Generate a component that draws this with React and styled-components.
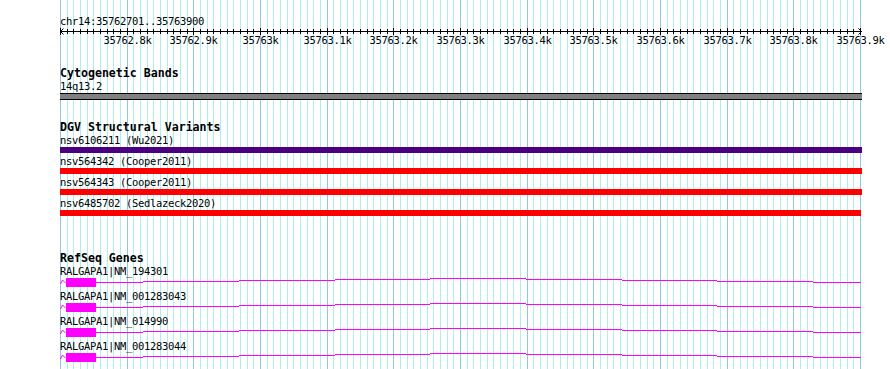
import styled, { createGlobalStyle } from "styled-components";

const GlobalStyle = createGlobalStyle`
  html, body {
    margin: 0;
    padding: 0;
    background: #ffffff;
  }
`;

const MONO = `"DejaVu Sans Mono", "Liberation Mono", monospace`;
const SPAN = 800; // px covered by 35762701..35763900
const STEPS = 120; // 10bp grid
const xAt = (k) => Math.round((k * SPAN) / STEPS) + 0.5;

const ticks = Array.from({ length: STEPS + 1 }, (_, k) => k);
const rulerLabels = [
  "35762.8k", "35762.9k", "35763k", "35763.1k", "35763.2k", "35763.3k",
  "35763.4k", "35763.5k", "35763.6k", "35763.7k", "35763.8k", "35763.9k",
];

const variants = [
  { name: "nsv6106211 (Wu2021)", color: "#4b0082", width: 802 },
  { name: "nsv564342 (Cooper2011)", color: "#ff0000", width: 802 },
  { name: "nsv564343 (Cooper2011)", color: "#ff0000", width: 802 },
  { name: "nsv6485702 (Sedlazeck2020)", color: "#ff0000", width: 801 },
];

const genes = [
  "RALGAPA1|NM_194301",
  "RALGAPA1|NM_001283043",
  "RALGAPA1|NM_014990",
  "RALGAPA1|NM_001283044",
];

// intron hat, x from..to (relative to track start) and row
const intron = [
  [36, 83, 5], [83, 179, 4], [179, 275, 3], [275, 370, 2], [370, 466, 1],
  [466, 562, 2], [562, 657, 3], [657, 753, 4], [753, 801, 5],
];

export default function App() {
  return (
    <>
      <GlobalStyle />
      <Page>
        <Panel>
          <GridLayer width="802" height="369" shapeRendering="crispEdges">
            {ticks.map((k) => (
              <line
                key={k}
                x1={xAt(k)}
                x2={xAt(k)}
                y1="0"
                y2="369"
                stroke={k % 10 === 0 ? "#8cc6ea" : "#aeeeee"}
                strokeWidth="1"
              />
            ))}
          </GridLayer>
          <Tracks>
            <RulerTrack>
              <FeatureLabel>chr14:35762701..35763900</FeatureLabel>
              <Ruler width="830" height="20">
                <g shapeRendering="crispEdges" stroke="#000">
                  <line x1="0" x2="802" y1="4.5" y2="4.5" />
                  {ticks.map((k) => (
                    <line
                      key={k}
                      x1={xAt(k)}
                      x2={xAt(k)}
                      y1={k % 10 === 0 ? 1 : 2}
                      y2={k % 10 === 0 ? 8 : 7}
                    />
                  ))}
                </g>
                <polyline points="3.5,1.5 0.5,4.5 3.5,7.5" fill="none" stroke="#000" />
                <polyline points="798.5,1.5 801.5,4.5 798.5,7.5" fill="none" stroke="#000" />
                {rulerLabels.map((t, i) => (
                  <RulerText key={t} x={xAt((i + 1) * 10)} y="17" textAnchor="middle">
                    {t}
                  </RulerText>
                ))}
              </Ruler>
            </RulerTrack>

            <Track $top={20}>
              <TrackTitle>Cytogenetic Bands</TrackTitle>
              <FeatureLabel>14q13.2</FeatureLabel>
              <Bar $color="#808080" $height={5} $outlined />
            </Track>

            <Track $top={21}>
              <TrackTitle>DGV Structural Variants</TrackTitle>
              {variants.map((v, i) => (
                <Feature key={v.name} $gap={i === 0 ? 0 : 2}>
                  <FeatureLabel>{v.name}</FeatureLabel>
                  <Bar $color={v.color} $height={6} style={{ width: v.width }} />
                </Feature>
              ))}
            </Track>

            <Track $top={36}>
              <TrackTitle>RefSeq Genes</TrackTitle>
              {genes.map((g) => (
                <Feature key={g}>
                  <FeatureLabel>{g}</FeatureLabel>
                  <GeneGlyph width="802" height="13">
                    <polyline points="0.5,7 2.5,3 5.5,6" fill="none" stroke="#ff00ff" />
                    <g shapeRendering="crispEdges" fill="#ff00ff">
                      <rect x="6" y="1" width="30" height="9" />
                      {intron.map(([a, b, r]) => (
                        <rect key={a} x={a} y={r} width={b - a} height="1" />
                      ))}
                    </g>
                  </GeneGlyph>
                </Feature>
              ))}
            </Track>
          </Tracks>
        </Panel>
      </Page>
    </>
  );
}

const Page = styled.div`
  width: 890px;
  height: 369px;
  overflow: hidden;
  background: #ffffff;
`;

const Panel = styled.div`
  position: relative;
  margin-left: 60px;
  width: 830px;
  height: 369px;
`;

const GridLayer = styled.svg`
  position: absolute;
  left: 0;
  top: 0;
  z-index: 0;
`;

const Tracks = styled.div`
  position: relative;
  z-index: 1;
  display: flex;
  flex-direction: column;
`;

const RulerTrack = styled.div`
  display: flex;
  flex-direction: column;
  padding-top: 15px;
`;

const Ruler = styled.svg`
  display: block;
  overflow: visible;
`;

const RulerText = styled.text`
  font-family: ${MONO};
  font-size: 10.5px;
  letter-spacing: -0.32px;
  fill: #000;
`;

const Track = styled.section`
  display: flex;
  flex-direction: column;
  margin-top: ${(p) => p.$top}px;
`;

const TrackTitle = styled.div`
  font-family: ${MONO};
  font-weight: bold;
  font-size: 11.6px;
  line-height: 12px;
  height: 12px;
  margin-bottom: 1px;
  color: #000;
  white-space: nowrap;
`;

const FeatureLabel = styled.div`
  font-family: ${MONO};
  font-size: 10.5px;
  letter-spacing: -0.32px;
  line-height: 12px;
  height: 12px;
  color: #000;
  white-space: nowrap;
`;

const Feature = styled.div`
  display: flex;
  flex-direction: column;
  margin-top: ${(p) => p.$gap || 0}px;
`;

const Bar = styled.div`
  width: 802px;
  height: ${(p) => p.$height}px;
  margin-top: 1px;
  background: ${(p) => p.$color};
  border-top: ${(p) => (p.$outlined ? "1px solid #000" : "none")};
  border-bottom: ${(p) => (p.$outlined ? "1px solid #000" : "none")};
`;

const GeneGlyph = styled.svg`
  display: block;
`;
